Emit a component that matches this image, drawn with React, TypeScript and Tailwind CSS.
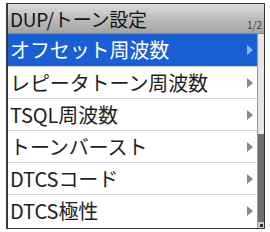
export default function App() {
  const items = [
    'オフセット周波数',
    'レピータトーン周波数',
    'TSQL周波数',
    'トーンバースト',
    'DTCSコード',
    'DTCS極性',
  ]

  return (
    <div
      className="w-[270px] h-[232px] bg-white pl-[6px] pt-[3px] overflow-hidden"
      style={{ fontFamily: '"Noto Sans CJK JP", "Noto Sans", sans-serif' }}
    >
      <div className="w-[259px] h-[226px] border-l-2 border-t border-r border-b border-[#3a3a3a] flex flex-col bg-white">
        <div className="h-[30px] shrink-0 flex items-end justify-between pl-[2px] pr-[2px] bg-gradient-to-b from-[#dcdcdc] via-[#bdbdbd] to-[#a4a4a4] border-b border-[#8a8a8a]">
          <span className="text-[19px] leading-[28px] text-[#151515] tracking-[-0.2px]">DUP/トーン設定</span>
          <span className="text-[10px] leading-[14px] text-[#444] mb-[1px]">1/2</span>
        </div>
        <div className="flex flex-1 min-h-0">
          <div className="flex-1 flex flex-col">
            {items.map((item, i) => (
              <div
                key={i}
                className={
                  i === 0
                    ? 'h-[32px] flex items-center justify-between pl-[2px] pr-[4px] bg-[#1b5fd4] text-white'
                    : 'h-[32px] flex items-center justify-between pl-[2px] pr-[4px] text-[#1e1e1e] border-t border-[#d6d6d6]'
                }
              >
                <span className="text-[20px] leading-none tracking-[-0.1px]">{item}</span>
                <svg width="6" height="10" viewBox="0 0 6 10">
                  <path d="M0 0 L6 5 L0 10 Z" fill={i === 0 ? '#8fb4f0' : '#8a8a8a'} />
                </svg>
              </div>
            ))}
          </div>
          <div className="w-[7px] shrink-0 flex flex-col border-l border-[#9a9a9a]">
            <div className="h-[100px] bg-[#e6e6e6]" />
            <div className="flex-1 bg-[#6e6e6e]" />
            <div className="h-[6px] bg-[#cfcfcf] flex items-center justify-center">
              <div className="w-[3px] h-[3px] bg-[#333]" />
            </div>
          </div>
        </div>
      </div>
    </div>
  )
}
